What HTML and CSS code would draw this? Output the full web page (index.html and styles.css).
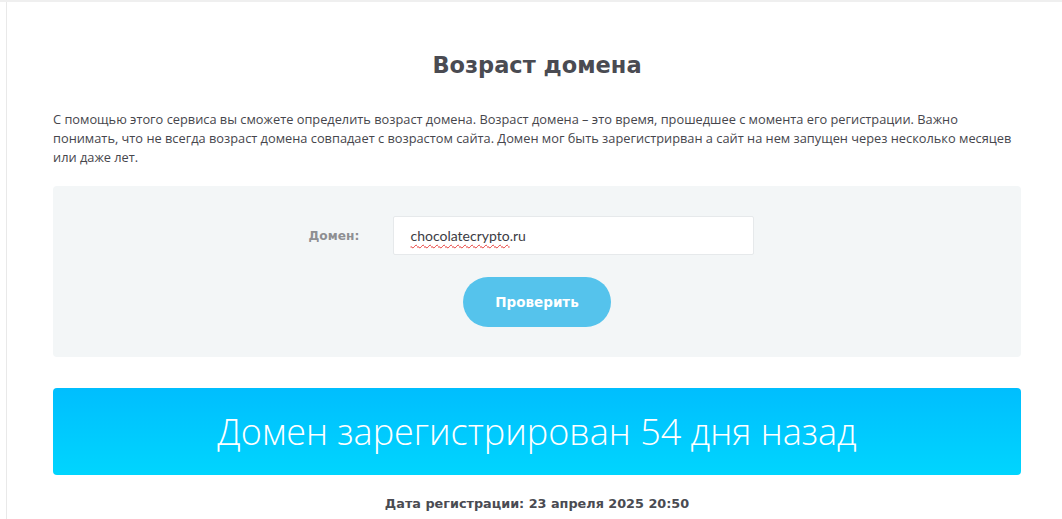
FILE: index.html
```html
<!DOCTYPE html>
<html lang="ru">
<head>
<meta charset="utf-8">
<title>Возраст домена</title>
<link rel="stylesheet" href="styles.css">
</head>
<body>
<div class="topbar"></div>
<div class="page">
  <h1 class="title">Возраст домена</h1>
  <p class="intro">С помощью этого сервиса вы сможете определить возраст домена. Возраст домена – это время, прошедшее с момента его регистрации. Важно понимать, что не всегда возраст домена совпадает с возрастом сайта. Домен мог быть зарегистрирван а сайт на нем запущен через несколько месяцев или даже лет.</p>
  <form class="check-box">
    <div class="field-row">
      <label class="field-label" for="domain">Домен:</label>
      <div class="field-input"><span class="spell">chocolatecrypto</span>.ru</div>
    </div>
    <div class="btn-row">
      <button type="button" class="btn">Проверить</button>
    </div>
  </form>
  <div class="result">Домен зарегистрирован 54 дня назад</div>
  <div class="reg-date">Дата регистрации: 23 апреля 2025 20:50</div>
</div>
</body>
</html>
```
FILE: styles.css
```css
html, body {
  margin: 0;
  padding: 0;
  background: #ffffff;
}
body {
  font-family: "Open Sans", "Lato", sans-serif;
  color: #4a4a4f;
}
.topbar {
  height: 2px;
  background: #efefef;
}
.page {
  margin-left: 6px;
  border-left: 1px solid #e9e9e9;
  padding: 0 41px 0 46px;
  min-height: 517px;
  box-sizing: border-box;
}
.title {
  margin: 0;
  padding-top: 48px;
  font-family: "DejaVu Sans", sans-serif;
  font-weight: bold;
  font-size: 22.5px;
  line-height: 30px;
  text-align: center;
  color: #4a4b52;
}
.intro {
  margin: 30px 0 0;
  font-size: 12.8px;
  line-height: 19px;
  color: #46464c;
}
.check-box {
  margin-top: 19px;
  background: #f3f6f7;
  border-radius: 4px;
  height: 171px;
  box-sizing: border-box;
  padding-top: 30px;
}
.field-row {
  display: flex;
  justify-content: center;
  align-items: center;
  padding-right: 12px;
}
.field-label {
  font-family: "DejaVu Sans", sans-serif;
  font-weight: bold;
  font-size: 12.2px;
  color: #8e8f92;
  width: 84px;
}
.field-input {
  width: 361px;
  height: 39px;
  box-sizing: border-box;
  background: #fff;
  border: 1px solid #e6e9eb;
  border-radius: 2px;
  padding: 0 17px;
  font-family: "Lato", sans-serif;
  font-size: 14px;
  line-height: 37px;
  color: #3c3c44;
}
.spell {
  text-decoration: underline wavy #e53935;
  text-decoration-thickness: 1px;
  text-underline-offset: 3px;
}
.btn-row {
  display: flex;
  justify-content: center;
  margin-top: 22px;
}
.btn {
  width: 148px;
  height: 50px;
  border: none;
  border-radius: 25px;
  background: #55c3ec;
  color: #ffffff;
  font-family: "DejaVu Sans", sans-serif;
  font-weight: bold;
  font-size: 13.5px;
  cursor: pointer;
}
.result {
  margin-top: 31px;
  height: 87px;
  border-radius: 4px;
  background: linear-gradient(180deg, #00befe 0%, #00d5fe 100%);
  color: #ffffff;
  font-family: "Open Sans", sans-serif;
  font-weight: 300;
  font-size: 36px;
  line-height: 87px;
  text-align: center;
}
.reg-date {
  margin-top: 21px;
  font-family: "DejaVu Sans", sans-serif;
  font-weight: bold;
  font-size: 12.8px;
  text-align: center;
  color: #4a4b52;
}
```
